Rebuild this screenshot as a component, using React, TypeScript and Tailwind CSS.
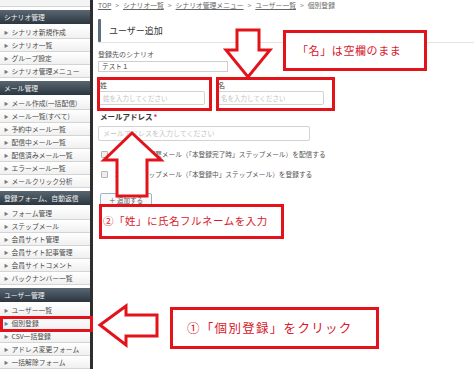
const sideGroups = [
  { title: "シナリオ管理", items: ["シナリオ新規作成", "シナリオ一覧", "グループ設定", "シナリオ管理メニュー"] },
  {
    title: "メール管理",
    items: ["メール作成(一括配信)", "メール一覧(すべて)", "予約中メール一覧", "配信中メール一覧", "配信済みメール一覧", "エラーメール一覧", "メールクリック分析"],
  },
  {
    title: "登録フォーム、自動返信",
    items: ["フォーム管理", "ステップメール", "会員サイト管理", "会員サイト記事管理", "会員サイトコメント", "バックナンバー一覧"],
  },
  { title: "ユーザー管理", items: ["ユーザー一覧", "個別登録", "CSV一括登録", "アドレス変更フォーム", "一括解除フォーム"] },
];

function SideItem({ label, active }: { label: string; active?: boolean }) {
  return (
    <div className="flex h-[13px] items-center border-b border-[#d4d4d4] bg-gradient-to-b from-white to-[#f0f0f0] pl-[4px] text-[6.8px] leading-none whitespace-nowrap text-[#4a4a4a]">
      <span className={active ? "mr-[3px] text-[4.5px] text-[#3f8fd2]" : "mr-[3px] text-[4.5px] text-[#7a7a7a]"}>▶</span>
      {label}
    </div>
  );
}

function Sidebar() {
  return (
    <aside className="w-[93px] shrink-0 border-r-[3px] border-[#2e2e2e] bg-white">
      <div className="h-[7px] border-b border-[#d4d4d4] bg-[#f4f4f4]" />
      {sideGroups.map((g) => (
        <div key={g.title}>
          <div className="mt-[3px] mb-[2px] flex h-[14px] items-center bg-gradient-to-b from-[#5a6772] to-[#2b3640] pl-[4px] text-[6.8px] leading-none whitespace-nowrap text-[#f2f2f2]">
            {g.title}
          </div>
          {g.items.map((it) => (
            <SideItem key={it} label={it} active={it === "個別登録"} />
          ))}
        </div>
      ))}
    </aside>
  );
}

function Checkbox() {
  return <span className="mr-[7px] inline-block h-[7px] w-[7px] shrink-0 rounded-[1px] border border-[#b5b5b5] bg-[#eeeeee]" />;
}

function MainForm() {
  return (
    <main className="flex-1 pl-[5px] text-[#555]">
      <div className="flex h-[10px] items-center gap-[4px] text-[6.8px] leading-none whitespace-nowrap text-[#666]">
        <span className="underline">TOP</span>
        <span>&gt;</span>
        <span className="underline">シナリオ一覧</span>
        <span>&gt;</span>
        <span className="underline">シナリオ管理メニュー</span>
        <span>&gt;</span>
        <span className="underline">ユーザー一覧</span>
        <span>&gt;</span>
        <span>個別登録</span>
      </div>

      <div className="mt-[9px] flex h-[24px] items-center border-b border-[#e4e4e4]">
        <div className="h-full w-[3px] rounded-[1px] bg-[#5b6f83]" />
        <span className="ml-[8px] text-[9px] leading-none text-[#333]">ユーザー追加</span>
      </div>

      <div className="mt-[6px] flex h-[10px] items-center text-[7px] leading-none">登録先のシナリオ</div>
      <div className="mt-[2px] flex h-[11px] w-[130px] items-center border border-[#cfcfcf] pl-[3px] text-[6.7px] leading-none text-[#444]">
        テスト１
      </div>

      <div className="mt-[8px] flex gap-[11px]">
        <div className="w-[107px]">
          <div className="flex h-[10px] items-center pl-[2px] text-[7px] leading-none text-[#444]">姓</div>
          <div className="mt-[1px] flex h-[14px] items-center rounded-[2px] border border-[#d2d2d2] pl-[4px] text-[6.5px] leading-none text-[#c4c4c4]">
            姓を入力してください
          </div>
        </div>
        <div className="w-[108px]">
          <div className="flex h-[10px] items-center pl-[2px] text-[7px] leading-none text-[#444]">名</div>
          <div className="mt-[1px] flex h-[14px] items-center rounded-[2px] border border-[#d2d2d2] pl-[4px] text-[6.5px] leading-none text-[#c4c4c4]">
            名を入力してください
          </div>
        </div>
      </div>

      <div className="mt-[7px] flex h-[10px] items-center pl-[2px] text-[7.5px] font-bold leading-none text-[#333]">
        メールアドレス<span className="ml-[1px] text-[#e0303a]">*</span>
      </div>
      <div className="mt-[4px] flex h-[15px] w-[212px] items-center rounded-[2px] border border-[#d2d2d2] pl-[4px] text-[7px] leading-none text-[#c4c4c4]">
        メールアドレスを入力してください
      </div>

      <div className="mt-[8px] flex h-[10px] items-center pl-[3px] text-[6.7px] leading-none whitespace-nowrap text-[#555]">
        <Checkbox />
        本登録時の履歴メール（「本登録完了時」ステップメール）を配信する
      </div>
      <div className="mt-[10px] flex h-[10px] items-center pl-[3px] text-[6.7px] leading-none whitespace-nowrap text-[#555]">
        <Checkbox />
        本登録ステップメール（「本登録中」ステップメール）を登録する
      </div>

      <div className="mt-[14px] ml-[2px] flex h-[14px] w-[52px] items-center justify-center rounded-[2px] border border-[#9fb3c8] bg-[#f7f9fb] text-[6.5px] leading-none text-[#555]">
        ＋ 追加する
      </div>
    </main>
  );
}

function Callout({ className, text }: { className: string; text: string }) {
  return (
    <div className={`absolute flex items-center border-[3px] border-[#e3131b] bg-white leading-none whitespace-nowrap text-[#d9182b] ${className}`}>
      {text}
    </div>
  );
}

export default function App() {
  return (
    <div className="relative flex h-[369px] w-[474px] overflow-hidden bg-white font-['Noto_Sans_CJK_JP','Noto_Sans',sans-serif]">
      <Sidebar />
      <MainForm />

      {/* annotation overlays */}
      <div className="absolute top-[316px] left-0 h-[16px] w-[93px] border-[3px] border-[#e3131b]" />
      <div className="absolute top-[77px] left-[97px] h-[34px] w-[115px] border-[3px] border-[#e3131b]" />
      <div className="absolute top-[77px] left-[216px] h-[34px] w-[119px] border-[3px] border-[#e3131b]" />

      <Callout className="top-[30px] left-[283px] h-[41px] w-[144px] pl-[11px] text-[11px] tracking-[0.6px]" text="「名」は空欄のまま" />
      <Callout className="top-[204px] left-[99px] h-[35px] w-[185px] pl-[1px] text-[10.5px] tracking-[0.5px]" text="②「姓」に氏名フルネームを入力" />
      <Callout className="top-[307px] left-[170px] h-[42px] w-[209px] pl-[14px] text-[12.5px] tracking-[1.3px]" text="①「個別登録」をクリック" />

      <svg className="pointer-events-none absolute inset-0" width="474" height="369" viewBox="0 0 474 369">
        <g fill="#fff" stroke="#e3131b" strokeWidth="3" strokeLinejoin="miter">
          <polygon points="237,30 259,30 259,50 270,50 248,77 226,50 237,50" />
          <polygon points="132,133 161,160 147,160 147,196 117,196 117,160 104,160" />
          <polygon points="100,325 126,306 126,315 157,315 157,336 126,336 126,345" />
        </g>
      </svg>
    </div>
  );
}
